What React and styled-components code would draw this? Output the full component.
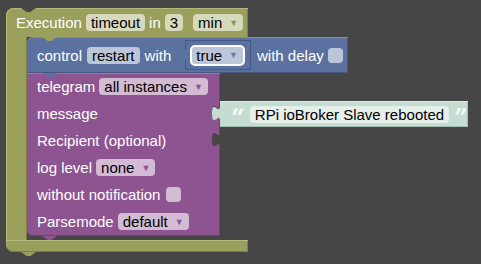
import React from 'react';
import styled, { createGlobalStyle } from 'styled-components';

const BG = '#464646';

const olive = { base: '#9aa05b', light: '#b4b97e', dark: '#7a7f45', field: '#d7d9bd', arrow: '#8d9350' };
const blue = { base: '#5b71a0', light: '#7b8db6', dark: '#465880', field: '#bdc6d9', arrow: '#6a7ea8' };
const purple = { base: '#8e5491', light: '#a674a8', dark: '#703f73', field: '#d2bbd3', arrow: '#8e5491' };
const mint = { base: '#c4ddd0', light: '#d8eae1', dark: '#a3bdb0', field: '#e6f0eb' };

const GlobalStyle = createGlobalStyle`
  html, body {
    margin: 0;
    padding: 0;
    background: ${BG};
  }
  body {
    font-family: "Liberation Sans", Arial, sans-serif;
    font-size: 15px;
  }
`;

const Workspace = styled.div`
  width: 481px;
  height: 264px;
  overflow: hidden;
  background: ${BG};
  box-sizing: border-box;
  padding: 8px 0 0 6px;
`;

const CBlock = styled.div`
  display: flex;
  flex-direction: column;
  width: 242px;
`;

const Shape = styled.div`
  position: relative;
  flex: none;
  white-space: nowrap;
  background: ${p => p.$c.base};
  box-shadow: inset 0 1px 0 ${p => p.$c.light}, inset 0 -1px 0 ${p => p.$c.dark},
    inset -1px 0 0 ${p => p.$c.dark};
`;

const Row = styled.div`
  display: flex;
  align-items: center;
  gap: 4px;
  color: #fff;
  white-space: nowrap;
`;

const CHeader = styled(Shape)`
  display: flex;
  align-items: center;
  gap: 4px;
  height: 29px;
  padding-left: 10px;
  color: #fff;
  border-radius: 8px 0 0 0;
  box-shadow: inset 0 1px 0 ${p => p.$c.light}, inset 1px 0 0 ${p => p.$c.light},
    inset -1px 0 0 ${p => p.$c.dark};
`;

const CBody = styled.div`
  display: flex;
`;

const CArm = styled.div`
  flex: none;
  width: 21px;
  background: ${olive.base};
  box-shadow: inset 1px 0 0 ${olive.light}, inset -1px 0 0 ${olive.dark};
`;

const Stack = styled.div`
  display: flex;
  flex-direction: column;
  align-items: flex-start;
  padding-bottom: 4px;
`;

const CFooter = styled(Shape)`
  height: 12px;
  border-radius: 0 0 0 8px;
  box-shadow: inset 0 1px 0 ${p => p.$c.light}, inset 0 -1px 0 ${p => p.$c.dark},
    inset -1px 0 0 ${p => p.$c.dark}, inset 1px 0 0 ${p => p.$c.light};
`;

const ControlBlock = styled(Shape)`
  display: flex;
  align-items: center;
  gap: 5px;
  width: 321px;
  height: 36px;
  box-sizing: border-box;
  padding: 0 5px 0 10px;
  color: #fff;
  border-radius: 6px 0 0 0;
`;

const TelegramBlock = styled(Shape)`
  display: flex;
  flex-direction: column;
  width: 193px;
  padding-bottom: 1px;
  border-radius: 0 0 0 6px;
`;

const TgRow = styled(Row)`
  position: relative;
  height: 27px;
  padding-left: 10px;
`;

const Notch = styled.span`
  position: absolute;
  left: ${p => p.$left}px;
  ${p => (p.$top !== undefined ? `top: ${p.$top}px;` : `bottom: ${p.$bottom}px;`)}
  width: 15px;
  height: 4px;
  background: ${p => p.$color};
  clip-path: polygon(0 0, 100% 0, 62% 100%, 38% 100%);
  z-index: 2;
`;

const Field = styled.span`
  display: inline-flex;
  align-items: center;
  flex: none;
  height: 17px;
  padding: 0 5px;
  border-radius: 4px;
  background: ${p => p.$c.field};
  color: #000;
  margin-left: ${p => p.$ml || 0}px;
`;

const Arrow = styled.span`
  font-size: 9px;
  margin-left: 7px;
  color: ${p => p.$c.arrow};
`;

const Check = styled.span`
  display: inline-block;
  flex: none;
  width: 15px;
  height: 15px;
  border-radius: 4px;
  background: ${p => p.$c.field};
  margin-left: ${p => p.$ml || 0}px;
`;

const Knob = styled.svg`
  position: absolute;
  top: ${p => p.$top}px;
  ${p => (p.$side === 'right' ? 'right: 0;' : 'left: -8px;')}
  z-index: 2;
`;

const PuzzleKnob = ({ color, side, top = 5 }) => (
  <Knob $side={side} $top={top} width="8" height="15" viewBox="0 0 8 15">
    <path d="M8 0 c0 10 -8 -8 -8 7.5 s8 -2.5 8 7.5 Z" fill={color} />
  </Knob>
);

const BoolBlock = styled.span`
  position: relative;
  display: inline-flex;
  align-items: center;
  flex: none;
  height: 28px;
  padding: 0 5px 0 4px;
  margin: 0 2px 0 10px;
  background: ${blue.base};
  box-shadow: 0 0 0 1px ${blue.dark};
`;

const BoolField = styled(Field)`
  height: 17px;
  padding: 0 5px 0 4px;
  border: 2px solid #fff;
  border-radius: 5px;
`;

const TextBlock = styled(Shape)`
  position: absolute;
  left: 100%;
  top: 1px;
  display: flex;
  align-items: center;
  width: 248px;
  height: 26px;
  box-sizing: border-box;
  padding-left: 11px;
  gap: 5px;
`;

const Quote = styled.span`
  color: #f4f9f6;
  font-family: "DejaVu Serif", serif;
  font-weight: bold;
  font-size: 24px;
  line-height: 1;
  margin-top: 7px;
`;

const Dropdown = ({ c, children, ml }) => (
  <Field $c={c} $ml={ml}>
    {children}
    <Arrow $c={c}>▼</Arrow>
  </Field>
);

export default function App() {
  return (
    <>
      <GlobalStyle />
      <Workspace>
        <CBlock>
          <CHeader $c={olive}>
            <Notch $left={15} $top={0} $color={BG} />
            Execution
            <Field $c={olive}>timeout</Field>
            in
            <Field $c={olive}>3</Field>
            <Dropdown c={olive} ml={6}>min</Dropdown>
            <Notch $left={36} $bottom={-4} $color={olive.base} />
          </CHeader>
          <CBody>
            <CArm />
            <Stack>
              <ControlBlock $c={blue}>
                control
                <Field $c={blue}>restart</Field>
                with
                <BoolBlock>
                  <PuzzleKnob color={blue.base} side="left" top={6} />
                  <BoolField $c={blue}>
                    true
                    <Arrow $c={blue}>▼</Arrow>
                  </BoolField>
                </BoolBlock>
                with delay
                <Check $c={blue} $ml={-1} />
                <Notch $left={15} $bottom={-4} $color={blue.base} />
              </ControlBlock>
              <TelegramBlock $c={purple}>
                <TgRow>
                  telegram
                  <Dropdown c={purple}>all instances</Dropdown>
                </TgRow>
                <TgRow>
                  message
                  <PuzzleKnob color={BG} side="right" />
                  <TextBlock $c={mint}>
                    <PuzzleKnob color={mint.base} side="left" />
                    <Quote>“</Quote>
                    <Field $c={mint}>RPi ioBroker Slave rebooted</Field>
                    <Quote>”</Quote>
                  </TextBlock>
                </TgRow>
                <TgRow>
                  Recipient (optional)
                  <PuzzleKnob color={BG} side="right" />
                </TgRow>
                <TgRow>
                  log level
                  <Dropdown c={purple}>none</Dropdown>
                </TgRow>
                <TgRow>
                  without notification
                  <Check $c={purple} $ml={2} />
                </TgRow>
                <TgRow>
                  Parsemode
                  <Dropdown c={purple}>default</Dropdown>
                </TgRow>
                <Notch $left={15} $bottom={-4} $color={purple.base} />
              </TelegramBlock>
            </Stack>
          </CBody>
          <CFooter $c={olive}>
            <Notch $left={15} $bottom={-4} $color={olive.base} />
          </CFooter>
        </CBlock>
      </Workspace>
    </>
  );
}
